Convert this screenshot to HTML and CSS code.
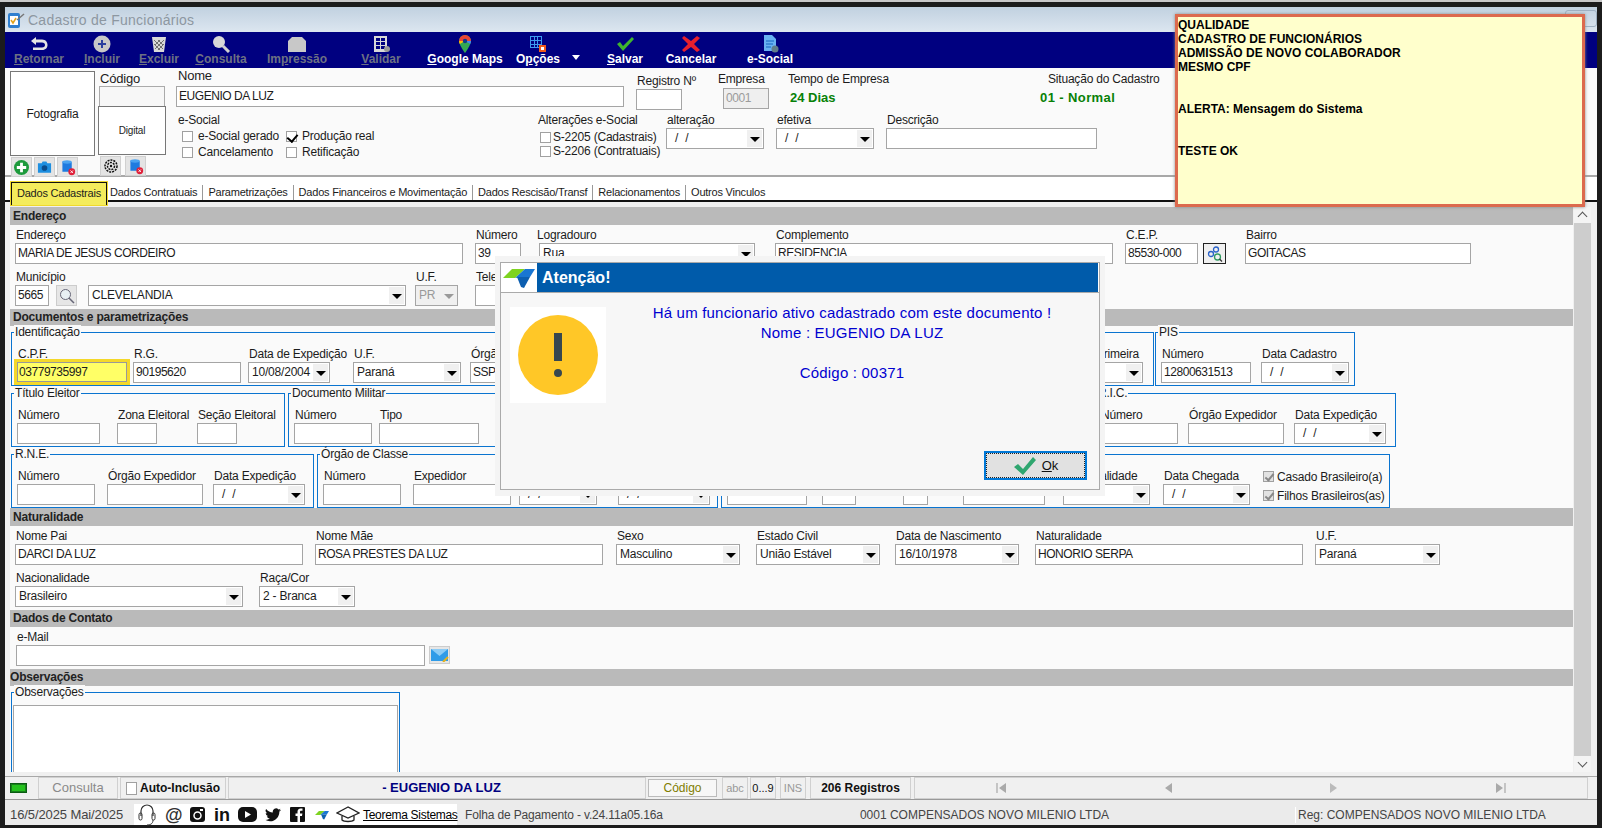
FILE: index.html
```html
<!DOCTYPE html>
<html lang="pt-BR">
<head>
<meta charset="utf-8">
<title>Cadastro de Funcionários</title>
<link rel="stylesheet" href="styles.css">
</head>
<body>
<svg class="defs" width="0" height="0">
  <symbol id="logo" viewBox="0 0 32 20">
    <polygon points="0,10 9,1 22,1 12,10" fill="#7ed321"/>
    <polygon points="12,10 22,1 32,1 27,9 19,9" fill="#1976d2"/>
    <polygon points="14,9 27,9 21,20 18,19" fill="#0d5fb0"/>
  </symbol>
  <symbol id="discard" viewBox="0 0 20 20">
    <path d="M4 3h10l1 1v11H4z" fill="#1e7be0"/><ellipse cx="9.500" cy="3.500" rx="5.500" ry="2" fill="#4aa3f0"/>
    <circle cx="15" cy="15" r="4" fill="#e0203a"/><path d="M13.500 13.500l3 3m0-3l-3 3" stroke="#fff" stroke-width="1"/>
  </symbol>
</svg>

<div class="win">
  <div class="titlebar">
    <svg class="title-ico" width="18" height="18" viewBox="0 0 18 18"><rect x="1" y="2" width="12" height="15" rx="2" fill="#2f7fd0"/><rect x="3" y="5" width="8" height="9" fill="#fff"/><path d="M4 9l2 3 3-5" stroke="#e2a21a" stroke-width="1.500" fill="none"/><path d="M10 9l7-6" stroke="#777" stroke-width="1.500"/></svg>
    <span class="title-text">Cadastro de Funcionários</span>
    <span class="win-btn"></span>
  </div>

  <div class="toolbar">
    <div class="tool off m7"><svg width="20" height="18" viewBox="0 0 20 18"><path d="M7 2L2 6l5 4V7.500h6c2 0 3 1 3 2.500s-1 2.500-3 2.500H4V15h9c4 0 5.500-2.500 5.500-5S17 4.500 13 4.500H7z" fill="#e4e4e4"/></svg><span><u>R</u>etornar</span></div>
    <div class="tool off m1"><svg width="20" height="18" viewBox="0 0 20 18"><circle cx="10" cy="9" r="8.500" fill="#c8c8c8"/><path d="M10 5v8M6 9h8" stroke="#2a3f9e" stroke-width="2"/></svg><span><u>I</u>ncluir</span></div>
    <div class="tool off m6"><svg width="20" height="18" viewBox="0 0 20 18"><path d="M3 2h14l-2 15H5z" fill="#d8d8d8"/><path d="M5 5l9 9M9 5l5 5M5 9l6 6M15 5l-9 9M11 5l-5 5M15 9l-6 6" stroke="#555" stroke-width=".8"/></svg><span><u>E</u>xcluir</span></div>
    <div class="tool off m20"><svg width="20" height="18" viewBox="0 0 20 18"><circle cx="8" cy="7" r="6" fill="#d8d8d8"/><path d="M12 11l6 6" stroke="#d0d0d0" stroke-width="3"/></svg><span><u>C</u>onsulta</span></div>
    <div class="tool off m28"><svg width="20" height="18" viewBox="0 0 20 18"><path d="M5 2h10l4 4v11H1V6z" fill="#c8c8c8"/></svg><span>Im<u>p</u>ressão</span></div>
    <div class="tool off m28"><svg width="20" height="18" viewBox="0 0 20 18"><path d="M3 1h13v16H3zM5 3v3h4V3zm5 0v3h4V3zM5 7v3h4V7zm5 0v3h4V7zM5 11v3h4v-3zm5 0v3h4v-3z" fill="#d8d8d8" fill-rule="evenodd"/><circle cx="16" cy="14" r="3" fill="#999"/></svg><span><u>V</u>alidar</span></div>
    <div class="tool m17"><svg width="20" height="18" viewBox="0 0 20 18"><path d="M10 0a6 6 0 0 1 6 6c0 4-6 12-6 12S4 10 4 6a6 6 0 0 1 6-6z" fill="#34a853"/><path d="M10 0a6 6 0 0 1 6 6H4a6 6 0 0 1 6-6z" fill="#ea4335"/><path d="M4 6c0 1 .3 2 .8 3L10 6z" fill="#fbbc04"/><path d="M16 6c0 1-.3 2-.8 3L10 6z" fill="#4285f4"/><circle cx="10" cy="6" r="2.200" fill="#0d3c8c"/></svg><span><u>G</u>oogle Maps</span></div>
    <div class="tool m31 tool-menu"><svg width="20" height="18" viewBox="0 0 20 18"><path d="M2 1h12v12H2zM3 2v3h3V2zm4 0v3h2V2zm3 0v3h3V2zM3 6v3h3V6zm4 0v3h2V6zm3 0v3h3V6zM3 10v2h3v-2zm4 0v2h2v-2zm3 0v2h3v-2z" fill="#3d9bf0" fill-rule="evenodd"/><rect x="11" y="10" width="7" height="7" fill="#ee5a1c"/><rect x="13" y="12" width="3" height="3" fill="#fff"/></svg><span>O<u>p</u>ções</span><i class="tool-caret"></i></div>
    <div class="tool m10"><svg width="20" height="18" viewBox="0 0 20 18"><path d="M2 9l3-2 3 4 9-9 2 2-11 12z" fill="#3fb52e"/></svg><span><u>S</u>alvar</span></div>
    <div class="tool m23"><svg width="20" height="18" viewBox="0 0 20 18"><path d="M3 1l7 5 6-5 3 2-6 6 6 6-3 2-6-5-7 5-2-2 6-6-6-6z" fill="#e8202e"/></svg><span>Cancelar</span></div>
    <div class="tool"><svg width="20" height="18" viewBox="0 0 20 18"><path d="M4 0h8l4 4v12H4z" fill="#69b1f2"/><path d="M6 6h8M6 9h7M6 12h5" stroke="#1565c0" stroke-width="1"/><circle cx="15" cy="14" r="3.500" fill="#607d8b"/></svg><span>e-Social</span></div>
  </div>

  <div class="header">
    <div class="col-photo">
      <div class="photo">Fotografia</div>
      <div class="mini-row">
        <span class="mini"><svg width="15" height="15" viewBox="0 0 16 16"><circle cx="8" cy="8" r="8" fill="#1d9a3c"/><path d="M8 3v10M3 8h10" stroke="#fff" stroke-width="3"/></svg></span>
        <span class="mini"><svg width="15" height="14" viewBox="0 0 16 14"><path d="M1 3h4l1-2h4l1 2h4v10H1z" fill="#1e8fe0"/><circle cx="8" cy="8" r="3" fill="#0b4d8c"/></svg></span>
        <span class="mini"><svg width="17" height="17"><use href="#discard"/></svg></span>
      </div>
    </div>
    <div class="col-code">
      <div class="lbl">Código</div>
      <div class="code-box"></div>
      <div class="digital">Digital</div>
      <div class="mini-row mini-row-code">
        <span class="mini"><svg width="14" height="14" viewBox="0 0 14 14"><circle cx="7" cy="7" r="6" fill="none" stroke="#111" stroke-width="1.500" stroke-dasharray="2 1"/><circle cx="7" cy="7" r="3.500" fill="none" stroke="#111" stroke-width="1.500" stroke-dasharray="2 1"/><circle cx="7" cy="7" r="1.200" fill="#111"/></svg></span>
        <span class="mini"><svg width="17" height="17"><use href="#discard"/></svg></span>
      </div>
    </div>
    <div class="col-main">
      <div class="head-a">
        <div class="field w448"><div class="lbl lbl-nome">Nome</div><div class="inp">EUGENIO DA LUZ</div></div>
        <div class="field w46 ml12 shift5"><div class="lbl">Registro Nº</div><div class="inp"></div></div>
        <div class="field w46 ml41 shift3"><div class="lbl lbl-out">Empresa</div><div class="inp inp-off">0001</div></div>
        <div class="field w260 ml18 shift3"><div class="lbl">Tempo de Empresa</div><div class="green">24 Dias</div></div>
        <div class="field w140 shift3"><div class="lbl">Situação do Cadastro</div><div class="green green-sit">01 - Normal</div></div>
      </div>
      <div class="head-b">
        <div class="esocial">
          <div class="lbl">e-Social</div>
          <div class="chk-grid">
            <label class="chk"><i class="box"></i>e-Social gerado</label>
            <label class="chk"><i class="box box-on"></i>Produção real</label>
            <label class="chk"><i class="box"></i>Cancelamento</label>
            <label class="chk"><i class="box"></i>Retificação</label>
          </div>
        </div>
        <div class="alter">
          <div class="lbl">Alterações e-Social</div>
          <label class="chk chk-s"><i class="box"></i>S-2205 (Cadastrais)</label>
          <label class="chk chk-s"><i class="box"></i>S-2206 (Contratuais)</label>
        </div>
        <div class="field w98"><div class="lbl">alteração</div><div class="sel"><span class="date">/ /</span><b class="dd"></b></div></div>
        <div class="field w98 ml12"><div class="lbl">efetiva</div><div class="sel"><span class="date">/ /</span><b class="dd"></b></div></div>
        <div class="field w211 ml12"><div class="lbl">Descrição</div><div class="inp"></div></div>
      </div>
    </div>
  </div>

  <div class="tabs">
    <span class="tab tab-on">Dados Cadastrais</span>
    <span class="tab">Dados Contratuais</span>
    <span class="tab">Parametrizações</span>
    <span class="tab">Dados Financeiros e Movimentação</span>
    <span class="tab">Dados Rescisão/Transf</span>
    <span class="tab">Relacionamentos</span>
    <span class="tab">Outros Vinculos</span>
  </div>

  <div class="main">
    <div class="content">
      <div class="section">Endereço</div>
      <div class="row">
        <div class="field w448 ml5"><div class="lbl">Endereço</div><div class="inp">MARIA DE JESUS CORDEIRO</div></div>
        <div class="field w46 ml12"><div class="lbl">Número</div><div class="inp">39</div></div>
        <div class="field w216 ml18"><div class="lbl lbl-log">Logradouro</div><div class="sel">Rua<b class="dd"></b></div></div>
        <div class="field w338 ml20"><div class="lbl">Complemento</div><div class="inp">RESIDENCIA</div></div>
        <div class="field w73 ml12"><div class="lbl">C.E.P.</div><div class="inp">85530-000</div></div>
        <span class="cep-btn"><svg width="16" height="16" viewBox="0 0 16 16"><circle cx="4" cy="8" r="2.500" fill="none" stroke="#2a62c9" stroke-width="1.300"/><circle cx="9" cy="3.500" r="2.500" fill="none" stroke="#2a62c9" stroke-width="1.300"/><circle cx="10.500" cy="11" r="3" fill="none" stroke="#2f9a5f" stroke-width="1.300"/><path d="M12.500 13l2.500 2.500" stroke="#333" stroke-width="1.300"/></svg></span>
        <div class="field w226 ml19"><div class="lbl">Bairro</div><div class="inp">GOITACAS</div></div>
      </div>
      <div class="row">
        <div class="field w34 ml5"><div class="lbl">Município</div><div class="inp">5665</div></div>
        <span class="mag-btn"><svg width="16" height="16" viewBox="0 0 16 16"><circle cx="6.500" cy="6.500" r="5" fill="#e8f0f4" stroke="#667" stroke-width="1"/><path d="M10 10l5 5" stroke="#667" stroke-width="1.500"/></svg></span>
        <div class="field w318 ml11"><div class="lbl">&nbsp;</div><div class="sel">CLEVELANDIA<b class="dd"></b></div></div>
        <div class="field w43 ml9"><div class="lbl">U.F.</div><div class="sel sel-off">PR<b class="dd dd-off"></b></div></div>
        <div class="field w80 ml17"><div class="lbl">Telefone</div><div class="inp"></div></div>
      </div>

      <div class="section section-docs">Documentos e parametrizações</div>
      <div class="group-row">
        <div class="group g-ident">
          <span class="legend">Identificação</span>
          <div class="cpf-wrap"><div class="lbl">C.P.F.</div><div class="inp inp-cpf">03779735997</div></div>
          <div class="field w108 ml3"><div class="lbl">R.G.</div><div class="inp">90195620</div></div>
          <div class="field w82 ml7"><div class="lbl">Data de Expedição</div><div class="sel">10/08/2004<b class="dd"></b></div></div>
          <div class="field w108 ml23"><div class="lbl">U.F.</div><div class="sel">Paraná<b class="dd"></b></div></div>
          <div class="field w90 ml9"><div class="lbl">Órgão</div><div class="inp">SSP</div></div>
          <div class="field w92 push"><div class="lbl lbl-end">Primeira</div><div class="sel"><b class="dd"></b></div></div>
        </div>
        <div class="group g-pis">
          <span class="legend">PIS</span>
          <div class="field w90"><div class="lbl">Número</div><div class="inp">12800631513</div></div>
          <div class="field w88 ml10"><div class="lbl">Data Cadastro</div><div class="sel"><span class="date">/ /</span><b class="dd"></b></div></div>
        </div>
      </div>
      <div class="group-row">
        <div class="group g-tit">
          <span class="legend">Título Eleitor</span>
          <div class="field w83"><div class="lbl">Número</div><div class="inp"></div></div>
          <div class="field w40 ml17"><div class="lbl">Zona Eleitoral</div><div class="inp"></div></div>
          <div class="field w40 ml40"><div class="lbl">Seção Eleitoral</div><div class="inp"></div></div>
        </div>
        <div class="group g-mil">
          <span class="legend">Documento Militar</span>
          <div class="field w78"><div class="lbl">Número</div><div class="inp"></div></div>
          <div class="field w100 ml7"><div class="lbl">Tipo</div><div class="inp"></div></div>
        </div>
        <div class="group g-ric">
          <span class="legend">R.I.C.</span>
          <div class="field w78"><div class="lbl">Número</div><div class="inp"></div></div>
          <div class="field w96 ml10"><div class="lbl">Órgão Expedidor</div><div class="inp"></div></div>
          <div class="field w92 ml10"><div class="lbl">Data Expedição</div><div class="sel"><span class="date">/ /</span><b class="dd"></b></div></div>
        </div>
      </div>
      <div class="group-row">
        <div class="group g-rne">
          <span class="legend">R.N.E.</span>
          <div class="field w78"><div class="lbl">Número</div><div class="inp"></div></div>
          <div class="field w96 ml12"><div class="lbl">Órgão Expedidor</div><div class="inp"></div></div>
          <div class="field w92 ml10"><div class="lbl">Data Expedição</div><div class="sel"><span class="date">/ /</span><b class="dd"></b></div></div>
        </div>
        <div class="group g-cla">
          <span class="legend">Órgão de Classe</span>
          <div class="field w78"><div class="lbl">Número</div><div class="inp"></div></div>
          <div class="field w98 ml12"><div class="lbl">Expedidor</div><div class="inp"></div></div>
          <div class="field w78 ml8"><div class="lbl">&nbsp;</div><div class="sel"><span class="date">/ /</span><b class="dd"></b></div></div>
          <div class="field w92 ml21"><div class="lbl">&nbsp;</div><div class="sel"><span class="date">/ /</span><b class="dd"></b></div></div>
        </div>
        <div class="group g-est">
          <div class="field w80"><div class="lbl">&nbsp;</div><div class="inp"></div></div>
          <div class="field w34 ml15"><div class="lbl">&nbsp;</div><div class="inp"></div></div>
          <div class="field w25 ml47"><div class="lbl">&nbsp;</div><div class="inp"></div></div>
          <div class="field w82 ml35"><div class="lbl">&nbsp;</div><div class="inp"></div></div>
          <div class="field w87 ml18"><div class="lbl lbl-end2">Nacionalidade</div><div class="sel"><b class="dd"></b></div></div>
          <div class="field w87 ml13"><div class="lbl">Data Chegada</div><div class="sel"><span class="date">/ /</span><b class="dd"></b></div></div>
          <div class="flags">
            <label class="chk"><i class="box box-dis"></i>Casado Brasileiro(a)</label>
            <label class="chk"><i class="box box-dis"></i>Filhos Brasileiros(as)</label>
          </div>
        </div>
      </div>

      <div class="section section-nat">Naturalidade</div>
      <div class="row">
        <div class="field w288 ml5"><div class="lbl">Nome Pai</div><div class="inp">DARCI DA LUZ</div></div>
        <div class="field w288 ml12"><div class="lbl">Nome Mãe</div><div class="inp">ROSA PRESTES DA LUZ</div></div>
        <div class="field w124 ml13"><div class="lbl">Sexo</div><div class="sel">Masculino<b class="dd"></b></div></div>
        <div class="field w124 ml16"><div class="lbl">Estado Civil</div><div class="sel">União Estável<b class="dd"></b></div></div>
        <div class="field w124 ml15"><div class="lbl">Data de Nascimento</div><div class="sel">16/10/1978<b class="dd"></b></div></div>
        <div class="field w268 ml16"><div class="lbl">Naturalidade</div><div class="inp">HONORIO SERPA</div></div>
        <div class="field w125 ml12"><div class="lbl">U.F.</div><div class="sel">Paraná<b class="dd"></b></div></div>
      </div>
      <div class="row">
        <div class="field w228 ml5"><div class="lbl">Nacionalidade</div><div class="sel">Brasileiro<b class="dd"></b></div></div>
        <div class="field w96 ml16"><div class="lbl">Raça/Cor</div><div class="sel">2 - Branca<b class="dd"></b></div></div>
      </div>

      <div class="section section-tight">Dados de Contato</div>
      <div class="row">
        <div class="field w409 ml6"><div class="lbl">e-Mail</div><div class="inp"></div></div>
        <span class="mail-btn"><svg width="18" height="13" viewBox="0 0 18 13"><rect width="17" height="12" fill="#2f9be8"/><path d="M0 0l8.500 7L17 0" fill="#8ccbf5"/><path d="M12 13l5-5" stroke="#e5b21c" stroke-width="2"/></svg></span>
      </div>

      <div class="section section-obs">Observações</div>
      <div class="group g-obs">
        <span class="legend">Observações</span>
        <div class="memo"></div>
      </div>
    </div>
    <div class="scrollbar">
      <span class="sb-arrow sb-up"></span>
      <span class="sb-track"></span>
      <span class="sb-arrow sb-down"></span>
    </div>
  </div>

  <div class="status">
    <span class="led"></span>
    <span class="st st-mode">Consulta</span>
    <span class="st st-auto"><i class="box"></i>Auto-Inclusão</span>
    <span class="st st-name">- EUGENIO DA LUZ</span>
    <span class="st st-code">Código</span>
    <span class="st st-abc">abc</span>
    <span class="st st-num">0...9</span>
    <span class="st st-ins">INS</span>
    <span class="st st-reg">206 Registros</span>
    <div class="st st-nav">
      <svg width="12" height="12" viewBox="0 0 12 12"><path d="M2 1v10" stroke="#999"/><polygon points="11,1 4,6 11,11" fill="#aaa"/></svg>
      <svg width="12" height="12" viewBox="0 0 12 12"><polygon points="10,1 3,6 10,11" fill="#aaa"/></svg>
      <svg width="12" height="12" viewBox="0 0 12 12"><polygon points="2,1 9,6 2,11" fill="#bbb"/></svg>
      <svg width="12" height="12" viewBox="0 0 12 12"><polygon points="1,1 8,6 1,11" fill="#aaa"/><path d="M10 1v10" stroke="#999"/></svg>
    </div>
  </div>

  <div class="foot">
    <span class="ft ft-date">16/5/2025 Mai/2025</span>
    <div class="ft-icons">
      <svg class="i-head" width="18" height="24" viewBox="0 0 18 24"><path d="M3 13V8a6 6 0 0 1 12 0v5" fill="none" stroke="#333" stroke-width="1.200"/><rect x="1" y="10" width="3" height="7" rx="1.500" fill="none" stroke="#333"/><rect x="14" y="10" width="3" height="7" rx="1.500" fill="none" stroke="#333"/><path d="M15 17c0 4-3 5-6 5" fill="none" stroke="#333"/></svg>
      <span class="i-at">@</span>
      <svg class="i-ig" width="15" height="15" viewBox="0 0 15 15"><rect width="15" height="15" rx="3" fill="#111"/><circle cx="7.500" cy="8.500" r="3.500" fill="none" stroke="#fff" stroke-width="1.500"/><rect x="10" y="2" width="3" height="2" fill="#fff"/></svg>
      <span class="i-in">in</span>
      <svg class="i-yt" width="19" height="15" viewBox="0 0 19 15"><rect width="19" height="15" rx="5" fill="#111"/><polygon points="7,4 13,7.500 7,11" fill="#fff"/></svg>
      <svg class="i-tw" width="16" height="14" viewBox="0 0 24 20"><path d="M24 2.400a10 10 0 0 1-2.800.8A5 5 0 0 0 23.300.5a10 10 0 0 1-3.100 1.200 4.900 4.900 0 0 0-8.400 4.500A14 14 0 0 1 1.700.9a4.900 4.900 0 0 0 1.500 6.600 4.900 4.900 0 0 1-2.200-.6 4.900 4.900 0 0 0 3.900 4.900 5 5 0 0 1-2.200.1 4.900 4.900 0 0 0 4.600 3.400A10 10 0 0 1 0 17.300 14 14 0 0 0 7.500 19.500c9.100 0 14.300-7.700 14-14.600A10 10 0 0 0 24 2.400z" fill="#111"/></svg>
      <svg class="i-fb" width="15" height="15" viewBox="0 0 15 15"><rect width="15" height="15" rx="1" fill="#111"/><path d="M10 15V9h2l.4-2.500H10V5c0-.8.300-1.200 1.200-1.200h1.300V1.500H10.700C8.500 1.500 7.500 2.800 7.500 4.800v1.700H5.500V9h2v6z" fill="#fff"/></svg>
      <svg class="i-lg" width="14" height="14"><use href="#logo"/></svg>
      <svg class="i-cap" width="24" height="20" viewBox="0 0 24 20"><path d="M12 2L1 8l11 5 11-5z" fill="none" stroke="#222" stroke-width="1.300"/><path d="M6 11v4c2 2 10 2 12 0v-4" fill="none" stroke="#222" stroke-width="1.300"/></svg>
      <span class="teorema">Teorema Sistemas</span>
    </div>
    <span class="ft ft-app">Folha de Pagamento - v.24.11a05.16a</span>
    <span class="ft ft-comp">0001 COMPENSADOS NOVO MILENIO LTDA</span>
    <span class="ft ft-reg">Reg: COMPENSADOS NOVO MILENIO LTDA</span>
  </div>
</div>

<div class="note">QUALIDADE<br>CADASTRO DE FUNCIONÁRIOS<br>ADMISSÃO DE NOVO COLABORADOR<br>MESMO CPF<br><br><br>ALERTA: Mensagem do Sistema<br><br><br>TESTE OK</div>

<div class="dialog">
  <div class="dlg-title">
    <span class="dlg-logo"><svg width="32" height="20"><use href="#logo"/></svg></span>
    <span class="dlg-head">Atenção!</span>
  </div>
  <div class="dlg-body">
    <div class="dlg-icon"><svg width="80" height="80" viewBox="0 0 80 80"><circle cx="40" cy="40" r="40" fill="#ffc727"/><rect x="36" y="18" width="8" height="28" fill="#37474f"/><circle cx="40" cy="58" r="4" fill="#37474f"/></svg></div>
    <div class="dlg-msg">Há um funcionario ativo cadastrado com este documento !<br>Nome : EUGENIO DA LUZ<br><br>Código : 00371</div>
  </div>
  <div class="dlg-foot">
    <button class="ok" type="button"><svg width="24" height="20" viewBox="0 0 24 20"><path d="M1 11l4-3 5 5L20 1l3 3-13 15z" fill="#2fa66f"/></svg><span><u>O</u>k</span></button>
  </div>
</div>
</body>
</html>
```
FILE: styles.css
```css
* { box-sizing: border-box; }
html, body { margin: 0; padding: 0; }
body {
  width: 1602px; height: 828px; overflow: hidden; position: relative;
  background: #1c1c1c; color: #1c1c1c;
  font: 12px/16px "Liberation Sans", Arial, sans-serif;
  letter-spacing: -.2px;
  border-top: 2px solid #c8c8c8;
}
.defs { position: absolute; }
i, b { display: block; }

.win {
  margin: 5px 5px 0; width: 1592px; height: 818px;
  display: flex; flex-direction: column; background: #f0f0f0;
}

/* title bar */
.titlebar {
  height: 25px; flex: none; display: flex; align-items: center; padding-left: 2px;
  background: linear-gradient(#c1d1e0, #dce6f0);
}
.title-ico { margin-right: 3px; }
.title-text { font-size: 14px; color: #8d97a1; letter-spacing: .25px; }
.win-btn {
  margin-left: auto; width: 32px; height: 17px; margin-top: -3px;
  border: 1px solid #9fb1c3; border-radius: 3px;
}

/* toolbar */
.toolbar { height: 36px; flex: none; background: #000080; display: flex; padding-left: 6px; }
.tool {
  width: 56px; display: flex; flex-direction: column; align-items: center;
  color: #fff; font-weight: bold; font-size: 12px; line-height: 15px; white-space: nowrap;
  padding-top: 3px; position: relative; letter-spacing: 0;
}
.tool svg { height: 18px; }
.tool span { margin-top: -1px; }
.tool.off { color: #6d7183; }
.m1 { margin-right: 1px; } .m6 { margin-right: 6px; } .m7 { margin-right: 7px; }
.m10 { margin-right: 10px; } .m17 { margin-right: 17px; } .m20 { margin-right: 20px; }
.m23 { margin-right: 23px; } .m28 { margin-right: 28px; } .m31 { margin-right: 31px; }
.tool-caret {
  position: absolute; right: -14px; top: 23px; width: 0; height: 0;
  border: 4px solid transparent; border-top: 5px solid #fff; border-bottom: 0;
}

/* header */
.header { height: 109px; flex: none; background: #fafafa; display: flex; border-bottom: 2px solid #a8a8a8; padding-left: 5px; padding-top: 3px; }
.col-photo { width: 89px; }
.photo {
  width: 85px; height: 85px; border: 1px solid #777; background: #fff;
  display: flex; align-items: center; justify-content: center;
}
.mini-row { display: flex; gap: 2px; margin: 1px 0 0 1px; }
.mini-row-code { margin-left: 2px; gap: 4px; }
.mini {
  width: 21px; height: 20px; background: #e4e4e4; border: 1px solid #d0d0d0;
  display: flex; align-items: center; justify-content: center; flex: none;
}
.col-code { width: 78px; margin-left: -1px; padding-right: 10px; }
.col-code > .lbl { padding-left: 2px; font-size: 13px; height: 15px; }
.code-box { width: 66px; height: 21px; margin-left: 1px; border: 1px solid #aaa; background: #f7f7f7; }
.digital {
  width: 68px; height: 49px; margin-top: -1px; border: 1px solid #777; background: #fff;
  font-size: 10px; display: flex; align-items: center; justify-content: center;
}
.col-main { flex: 1; }
.head-a { height: 41px; display: flex; margin-top: -3px; }
.head-b { display: flex; padding-top: 3px; }
.field { display: flex; flex-direction: column; flex: none; }
.lbl { height: 16px; line-height: 16px; padding-left: 1px; white-space: nowrap; }
.lbl-nome { padding-left: 2px; height: 18px; font-size: 13px; }
.lbl-out { margin-left: -6px; }
.lbl-log { margin-left: -3px; }
.lbl-end { text-align: right; padding-right: 4px; }
.lbl-end2 { text-align: right; padding-right: 14px; }
.shift5 { padding-top: 5px; }
.shift3 { padding-top: 3px; }
.shift3 > .lbl, .shift5 > .lbl { height: 18px; }
.inp, .sel {
  height: 21px; border: 1px solid #a5a5a5; background: #fff;
  line-height: 19px; padding-left: 2px; white-space: nowrap; overflow: hidden; position: relative;
  flex: none;
}
.inp { letter-spacing: -.45px; }
.inp-off { background: #efefef; color: #9b9b9b; }
.sel { padding-left: 3px; }
.sel-off { background: #f0f0f0; color: #999; }
.date { padding-left: 5px; word-spacing: 4px; }
.dd { position: absolute; right: 1px; top: 1px; bottom: 1px; width: 15px; background: #f0f0f0; }
.dd::after {
  content: ""; position: absolute; left: 3px; top: 7px; width: 0; height: 0;
  border: 5px solid transparent; border-top: 5px solid #000; border-bottom: 0;
}
.dd-off::after { border-top-color: #999; }
.green { color: #078107; font-weight: bold; font-size: 13px; line-height: 18px; padding-left: 3px; letter-spacing: 0; }
.green-sit { padding-left: 0; margin-left: -7px; letter-spacing: .4px; }

.esocial { width: 361px; padding-left: 1px; }
.chk-grid { display: grid; grid-template-columns: 104px 120px; padding-left: 5px; }
.chk { display: flex; align-items: center; height: 16px; white-space: nowrap; }
.box { width: 11px; height: 11px; border: 1px solid #a0a0a0; background: #fff; margin-right: 4px; flex: none; position: relative; }
.chk-grid .box { margin-right: 5px; }
.box-on::after {
  content: ""; position: absolute; left: 2px; top: 0; width: 5px; height: 8px;
  border: solid #000; border-width: 0 2px 2px 0; transform: rotate(40deg);
}
.box-dis { background: #e2e2e2; }
.box-dis::after {
  content: ""; position: absolute; left: 3px; top: 0; width: 3px; height: 7px;
  border: solid #888; border-width: 0 2px 2px 0; transform: rotate(40deg);
}
.alter { width: 129px; }
.chk-s { height: 14px; margin-left: 3px; }
.alter .lbl { margin-bottom: 2px; }
.chk-s .box { margin-right: 2px; }

/* widths */
.w25 { width: 25px; } .w34 { width: 34px; } .w40 { width: 40px; } .w43 { width: 43px; } .w46 { width: 46px; }
.w73 { width: 73px; } .w78 { width: 78px; } .w80 { width: 80px; } .w82 { width: 82px; } .w83 { width: 83px; }
.w87 { width: 87px; } .w88 { width: 88px; } .w90 { width: 90px; } .w92 { width: 92px; } .w96 { width: 96px; }
.w98 { width: 98px; } .w100 { width: 100px; } .w108 { width: 108px; } .w124 { width: 124px; } .w125 { width: 125px; }
.w140 { width: 140px; } .w211 { width: 211px; } .w216 { width: 216px; } .w226 { width: 226px; } .w228 { width: 228px; }
.w260 { width: 260px; } .w268 { width: 268px; } .w288 { width: 288px; } .w318 { width: 318px; } .w338 { width: 338px; }
.w409 { width: 409px; } .w448 { width: 448px; }
.ml3 { margin-left: 3px; } .ml5 { margin-left: 5px; } .ml6 { margin-left: 6px; } .ml7 { margin-left: 7px; }
.ml8 { margin-left: 8px; } .ml9 { margin-left: 9px; } .ml10 { margin-left: 10px; } .ml11 { margin-left: 11px; }
.ml12 { margin-left: 12px; } .ml13 { margin-left: 13px; } .ml15 { margin-left: 15px; } .ml16 { margin-left: 16px; }
.ml17 { margin-left: 17px; } .ml18 { margin-left: 18px; } .ml19 { margin-left: 19px; } .ml20 { margin-left: 20px; }
.ml21 { margin-left: 21px; } .ml23 { margin-left: 23px; } .ml35 { margin-left: 35px; } .ml40 { margin-left: 40px; }
.ml41 { margin-left: 41px; } .ml47 { margin-left: 47px; }
.push { margin-left: auto; }

/* tabs */
.tabs {
  height: 25px; flex: none; background: #fff; display: flex; align-items: center;
  padding: 4px 0 0 6px; border-bottom: 2px solid #111; position: relative; z-index: 1;
  font-size: 11px; letter-spacing: -.22px;
}
.tab { height: 15px; line-height: 15px; margin-top: 3px; padding: 0 5px; border-left: 1px solid #999; white-space: nowrap; }
.tab-on {
  align-self: flex-start; height: 23px; line-height: 21px; margin-top: 1px; padding: 0 0 0 5px; width: 96px;
  background: #f4ec5c; border: 1px solid #111; border-bottom: 0;
  box-shadow: 0 0 0 1px #f0d92e; margin-right: 0;
}
.tab-on + .tab { border-left: 0; padding-left: 3px; }

/* main */
.main {
  height: 575px; flex: none; display: flex; overflow: hidden; padding: 5px 0 0 5px;
  background: #f0f0f0; border-bottom: 1px solid #a8a8a8;
}
.content { width: 1563px; height: 565px; background: #fafafa; overflow: hidden; flex: none; }
.section { height: 18px; line-height: 18px; background: #bababa; font-weight: bold; padding-left: 3px; color: #222; }
.section-docs { margin-top: 3px; height: 17px; line-height: 17px; }
.section-tight { margin-top: 3px; height: 17px; line-height: 17px; }
.section-obs { margin-top: 3px; height: 17px; line-height: 17px; padding-left: 0; }
.row { display: flex; align-items: flex-start; height: 37px; margin-top: 2px; }
.row + .row { margin-top: 5px; }
.cep-btn, .mail-btn, .mag-btn { display: flex; align-items: center; justify-content: center; flex: none; }
.cep-btn { width: 23px; height: 21px; margin: 16px 0 0 5px; border: 1px solid #222; background: #f0f0f0; }
.mag-btn { width: 21px; height: 21px; margin: 16px 0 0 7px; background: #e6e6e6; border: 1px solid #ccc; }
.mail-btn { width: 21px; height: 18px; margin: 17px 0 0 4px; background: #e6e6e6; border: 1px solid #ccc; }

.group-row { display: flex; gap: 3px; margin: 7px 0 0 1px; height: 54px; }
.section-docs + .group-row { margin-top: 6px; }
.group {
  height: 54px; border: 1px solid #0a74d0; padding: 13px 5px 0; display: flex; align-items: flex-start;
  position: relative; flex: none;
}
.legend { position: absolute; left: 2px; top: -8px; background: #fafafa; padding: 0 1px; line-height: 15px; }
.g-ident { width: 1143px; padding-left: 1px; padding-right: 10px; }
.g-pis { width: 200px; margin-left: -2px; }
.g-tit { width: 274px; }
.g-mil { width: 803px; }
.g-ric { width: 302px; }
.g-rne { width: 303px; }
.g-cla { width: 401px; }
.g-est { width: 669px; }
.cpf-wrap { width: 116px; margin-left: 1px; }
.cpf-wrap .lbl { padding-left: 4px; }
.inp-cpf { width: 116px; height: 26px; margin-top: -3px; background: #ffff66; border: 3px solid #f4d82a; box-shadow: inset 0 0 0 1px #999; line-height: 20px; }
.flags { margin: 1px 0 0 13px; display: flex; flex-direction: column; gap: 4px; }
.flags .chk { height: 15px; }
.flags .box { margin-right: 3px; }
.g-obs { width: 389px; height: 90px; margin: 6px 0 0 1px; padding: 12px 1px 0; }
.memo { width: 100%; height: 80px; border: 1px solid #a5a5a5; background: #fff; }

.scrollbar { width: 17px; margin-left: 1px; display: flex; flex-direction: column; background: #f4f4f4; height: 565px; flex: none; }
.sb-arrow { height: 16px; position: relative; flex: none; }
.sb-arrow::after {
  content: ""; position: absolute; left: 5px; width: 6px; height: 6px;
  border: solid #555; border-width: 1.5px 0 0 1.5px; transform: rotate(45deg); top: 6px;
}
.sb-down::after { transform: rotate(225deg); top: 3px; }
.sb-track { flex: 1; background: #cdcdcd; }

/* status */
.status { height: 23px; flex: none; display: flex; padding: 0 0 0 5px; align-items: stretch; border-bottom: 1px solid #999; background: #f0f0f0; gap: 2px; letter-spacing: 0; }
.led { width: 17px; height: 10px; align-self: center; margin: 0 9px 0 0; background: #25c21d; border: 1px solid #0a5c12; box-shadow: inset 0 0 0 1px #17801a; }
.st { border: 1px solid #d0d0d0; display: flex; align-items: center; justify-content: center; white-space: nowrap; flex: none; }
.st-mode { width: 80px; color: #8a8a8a; font-size: 13px; }
.st-auto { width: 106px; font-weight: bold; color: #111; }
.st-auto .box { width: 11px; height: 13px; margin-right: 3px; }
.st-name { width: 418px; color: #000080; font-weight: bold; font-size: 13px; padding-left: 9px; }
.st-code { width: 69px; color: #807d00; height: 18px; align-self: center; border-color: #bbb; background: #f7f7f7; }
.st-abc { width: 26px; margin-left: 3px; color: #999; font-size: 11px; }
.st-num { width: 26px; color: #111; font-size: 11px; }
.st-ins { width: 26px; margin-left: 2px; color: #999; font-size: 11px; }
.st-reg { width: 101px; margin-left: 2px; font-weight: bold; color: #111; }
.st-nav { width: 674px; margin-left: 1px; justify-content: space-between; padding: 0 80px; }

/* footer */
.foot { height: 25px; flex: none; display: flex; align-items: center; background: #ebebeb; padding: 4px 0 0 3px; color: #444; font-size: 12px; letter-spacing: 0; white-space: nowrap; }
.ft-date { width: 126px; padding-left: 2px; font-size: 13px; letter-spacing: -.1px; }
.ft-icons { width: 323px; height: 21px; background: #fff; display: flex; align-items: center; color: #111; padding-left: 4px; }
.ft-icons svg { flex: none; }
.i-at { font-weight: bold; font-size: 18px; margin-left: 9px; width: 15px; color: #333; }
.i-ig { margin-left: 10px; }
.i-in { font-weight: bold; font-size: 18px; margin-left: 9px; width: 16px; }
.i-yt { margin-left: 8px; }
.i-tw { margin-left: 8px; }
.i-fb { margin-left: 9px; }
.i-lg { margin-left: 10px; }
.i-cap { margin-left: 7px; }
.teorema { margin-left: 3px; color: #000; text-decoration: underline; letter-spacing: -.3px; }
.ft-app { width: 247px; padding-left: 8px; letter-spacing: -.15px; }
.ft-comp { width: 592px; text-align: center; padding-right: 30px; border-right: 1px solid #fff; }
.ft-reg { padding-left: 2px; }

/* sticky note */
.note {
  position: absolute; left: 1175px; top: 12px; width: 410px; height: 193px; z-index: 5;
  background: #ffffcc; border: 3px solid #dc6a4e; box-shadow: 0 0 3px #888;
  color: #000; font-weight: bold; line-height: 14px; padding: 1px 0 0; white-space: nowrap; letter-spacing: 0;
}

/* dialog */
.dialog {
  position: absolute; left: 495px; top: 254px; width: 610px; height: 240px; z-index: 5;
  border: solid #f4f4f4; border-width: 6px 5px; background: #f7f7f7;
  box-shadow: inset 0 0 0 1px #aaa; display: flex; flex-direction: column; letter-spacing: 0;
}
.dlg-title { height: 30px; flex: none; margin: 1px 1px 0; display: flex; background: #fff; border-bottom: 1px solid #aaa; }
.dlg-logo { width: 36px; display: flex; align-items: center; justify-content: center; flex: none; }
.dlg-head { flex: 1; background: #005baa; color: #fff; font-weight: bold; font-size: 16px; line-height: 29px; padding-left: 5px; margin-right: 1px; }
.dlg-body { display: flex; padding: 14px 0 0 10px; height: 111px; flex: none; }
.dlg-icon { width: 96px; height: 96px; background: #fff; display: flex; align-items: center; justify-content: center; flex: none; }
.dlg-msg { flex: 1; text-align: center; color: #0000d0; font-size: 15px; line-height: 20px; margin-top: -4px; padding-right: 2px; letter-spacing: .2px; }
.dlg-foot { display: flex; justify-content: flex-end; padding: 47px 13px 0 0; }
.ok {
  width: 103px; height: 29px; padding: 0; background: #e1e1e1; border: 2px solid #0078d7;
  outline: 1px dotted #222; outline-offset: -3px; display: flex; align-items: center; justify-content: center; gap: 5px;
  font: 13px "Liberation Sans", Arial, sans-serif; color: #111;
}
```
